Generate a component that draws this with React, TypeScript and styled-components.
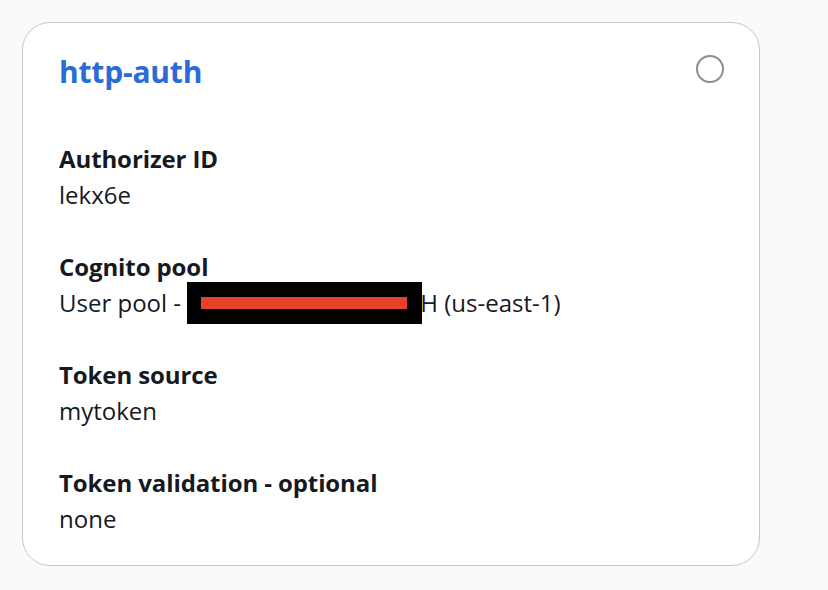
import styled, { createGlobalStyle } from 'styled-components';

const GlobalStyle = createGlobalStyle`
	body {
		margin: 0;
		background: #fafafa;
		font-family: 'Open Sans', 'Noto Sans', sans-serif;
		color: #16191f;
	}
`;

const Page = styled.div`
	padding: 22px 0 0 22px;
`;

const Card = styled.section`
	box-sizing: border-box;
	width: 738px;
	height: 544px;
	background: #ffffff;
	border: 1px solid #c6c6cd;
	border-radius: 28px;
	padding: 26px 36px 0 36px;
`;

const Header = styled.header`
	display: flex;
	justify-content: space-between;
	align-items: flex-start;
`;

const Title = styled.h2`
	margin: 0;
	font-size: 30px;
	font-weight: 700;
	line-height: 46px;
	color: #2a6bd8;
	letter-spacing: -0.2px;
`;

const Radio = styled.span`
	box-sizing: border-box;
	width: 28px;
	height: 28px;
	margin: 6px -1px 0 0;
	border: 2px solid #8c8c94;
	border-radius: 50%;
`;

const Fields = styled.dl`
	margin: 46px 0 0;
	display: flex;
	flex-direction: column;
	gap: 36px;
`;

const Field = styled.div`
	display: flex;
	flex-direction: column;
`;

const Label = styled.dt`
	font-size: 24px;
	font-weight: 700;
	line-height: 36px;
	letter-spacing: -0.1px;
`;

const Value = styled.dd`
	margin: 0;
	font-size: 24px;
	font-weight: 400;
	line-height: 36px;
`;

const Redacted = styled.span`
	display: inline-block;
	box-sizing: border-box;
	width: 235px;
	height: 42px;
	margin: -13px -2px -7px 0;
	vertical-align: middle;
	background: #000000;
	padding: 15px 15px 0 14px;
`;

const RedBar = styled.span`
	display: block;
	height: 12px;
	background: #e8412b;
`;

export default function App() {
	return (
		<Page>
			<GlobalStyle />
			<Card>
				<Header>
					<Title>http-auth</Title>
					<Radio />
				</Header>
				<Fields>
					<Field>
						<Label>Authorizer ID</Label>
						<Value>lekx6e</Value>
					</Field>
					<Field>
						<Label>Cognito pool</Label>
						<Value>
							User pool -{' '}
							<Redacted>
								<RedBar />
							</Redacted>
							H (us-east-1)
						</Value>
					</Field>
					<Field>
						<Label>Token source</Label>
						<Value>mytoken</Value>
					</Field>
					<Field>
						<Label>Token validation - optional</Label>
						<Value>none</Value>
					</Field>
				</Fields>
			</Card>
		</Page>
	);
}
